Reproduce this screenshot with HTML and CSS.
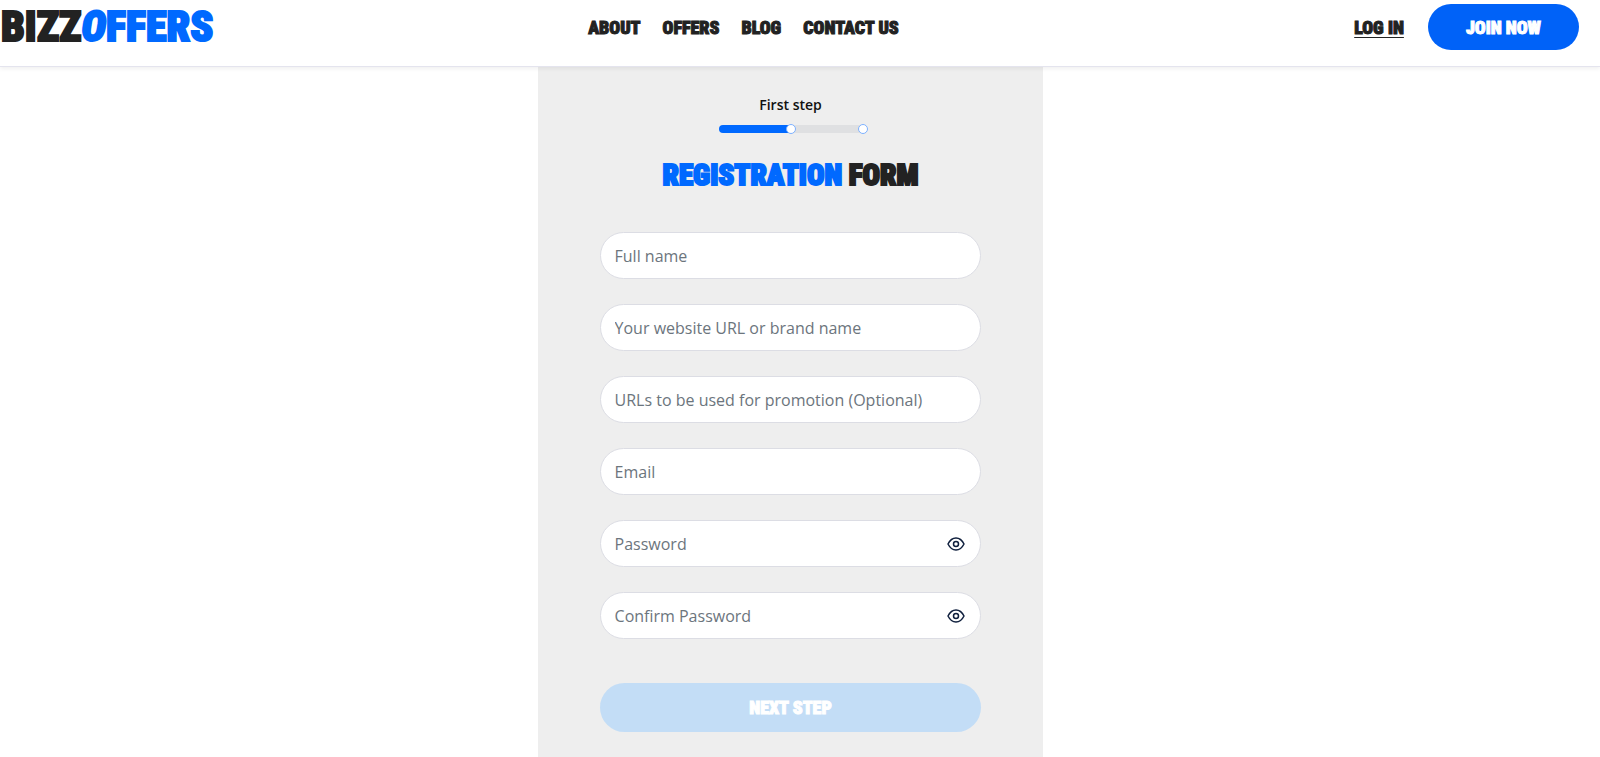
FILE: index.html
```html
<!DOCTYPE html>
<html lang="en">
  <head>
    <meta charset="UTF-8" />
    <meta name="viewport" content="width=device-width, initial-scale=1.0" />
    <title>BizzOffers - Registration</title>
    <link rel="stylesheet" href="styles.css">
  </head>
  <body>
    <header class="header">
      <a class="logo" href="#">BIZZ<span class="logo-blue"><i>O</i>FFERS</span></a>
      <nav class="nav">
        <a href="#">ABOUT</a>
        <a href="#">OFFERS</a>
        <a href="#">BLOG</a>
        <a href="#">CONTACT US</a>
      </nav>
      <div class="actions">
        <a class="login" href="#">LOG IN</a>
        <button class="join-btn" type="button">JOIN NOW</button>
      </div>
    </header>

    <main class="main">
      <section class="panel">
        <p class="step-label">First step</p>
        <div class="progress">
          <div class="progress-part done"><span class="dot"></span></div>
          <div class="progress-part"><span class="dot"></span></div>
        </div>
        <h1 class="title"><span>REGISTRATION</span> FORM</h1>

        <form class="form">
          <div class="field">
            <input type="text" placeholder="Full name" aria-label="Full name" />
          </div>
          <div class="field">
            <input type="text" placeholder="Your website URL or brand name" aria-label="Your website URL or brand name" />
          </div>
          <div class="field">
            <input type="text" placeholder="URLs to be used for promotion (Optional)" aria-label="URLs to be used for promotion (Optional)" />
          </div>
          <div class="field">
            <input type="email" placeholder="Email" aria-label="Email" />
          </div>
          <div class="field">
            <input type="password" placeholder="Password" aria-label="Password" />
            <button class="eye-btn" type="button" aria-label="Show password">
              <svg width="18" height="14" viewBox="0 0 18 14" fill="none" stroke="#0f1f3d" stroke-width="1.5">
                <path d="M1 7C3 3 5.8 1 9 1s6 2 8 6c-2 4-4.800 6-8 6S3 11 1 7z" stroke-linejoin="round" />
                <circle cx="9" cy="7" r="2.500" />
              </svg>
            </button>
          </div>
          <div class="field">
            <input type="password" placeholder="Confirm Password" aria-label="Confirm Password" />
            <button class="eye-btn" type="button" aria-label="Show password">
              <svg width="18" height="14" viewBox="0 0 18 14" fill="none" stroke="#0f1f3d" stroke-width="1.5">
                <path d="M1 7C3 3 5.8 1 9 1s6 2 8 6c-2 4-4.800 6-8 6S3 11 1 7z" stroke-linejoin="round" />
                <circle cx="9" cy="7" r="2.500" />
              </svg>
            </button>
          </div>
          <button class="next-btn" type="submit" disabled>NEXT STEP</button>
        </form>
      </section>
    </main>
  </body>
</html>
```
FILE: styles.css
```css
* {
  box-sizing: border-box;
}
body {
  margin: 0;
  min-height: 100vh;
  display: flex;
  flex-direction: column;
  background-color: #fff;
  color: #222;
  font-family: "Open Sans", "Noto Sans", sans-serif;
}
.header,
.title,
.join-btn,
.next-btn {
  font-family: Impact, "Roboto Condensed", Roboto, sans-serif;
  font-weight: 900;
}
.header {
  display: flex;
  align-items: center;
  height: 67px;
  padding: 4px 21px 16px 0;
  border-bottom: 1px solid #e4e4ee;
  box-shadow: 0 2px 4px rgba(0, 0, 0, 0.06);
  font-size: 18px;
  z-index: 1;
}
.header a {
  color: #222;
  text-decoration: none;
  white-space: nowrap;
}
.header .logo {
  flex: 0 0 37%;
  padding-left: 1px;
  font-size: 42px;
  line-height: 46px;
  -webkit-text-stroke: 2px currentColor;
}
.header .logo-blue {
  color: #0069ff;
}
.nav {
  display: flex;
  gap: 22px;
  margin-left: 4px;
}
.nav a,
.login,
.join-btn,
.next-btn {
  -webkit-text-stroke: 1px currentColor;
}
.actions {
  display: flex;
  align-items: center;
  gap: 24px;
  margin-left: auto;
}
.header .login {
  text-decoration: underline;
  text-underline-offset: 3px;
}
.join-btn {
  height: 46px;
  padding: 0 38px;
  border: none;
  border-radius: 23px;
  background-color: #0062f8;
  color: #fff;
  font-size: 18px;
  white-space: nowrap;
  cursor: pointer;
}
.main {
  flex: 1;
  display: flex;
  justify-content: center;
  padding-right: 19px;
}
.panel {
  width: 32%;
  min-width: 380px;
  padding: 28px 62px 24px;
  background-color: #eee;
}
.step-label {
  margin: 0 0 10px;
  color: #111;
  font-size: 14px;
  font-weight: 600;
  line-height: 20px;
  text-align: center;
}
.progress {
  display: flex;
  width: 144px;
  height: 8px;
  margin: 0 auto 22px;
}
.progress-part {
  flex: 1;
  display: flex;
  align-items: center;
  justify-content: flex-end;
  background-color: #dfe0e2;
}
.progress-part.done {
  background-color: #0069ff;
  border-radius: 4px 0 0 4px;
}
.dot {
  flex: none;
  width: 10px;
  height: 10px;
  margin-right: -5px;
  border: 1px solid #7db1ff;
  border-radius: 50%;
  background-color: #fff;
  z-index: 1;
}
.title {
  margin: 0 0 37px;
  font-size: 29px;
  line-height: 40px;
  text-align: center;
  -webkit-text-stroke: 2px currentColor;
}
.title span {
  color: #0069ff;
}
.form {
  display: flex;
  flex-direction: column;
  gap: 25px;
}
.field {
  display: flex;
  align-items: center;
  height: 47px;
  padding: 0 15px 0 14px;
  border: 1px solid #dcdde4;
  border-radius: 24px;
  background-color: #fff;
}
.field input {
  flex: 1;
  min-width: 0;
  padding: 0;
  border: none;
  outline: none;
  background: none;
  color: #222;
  font-family: inherit;
  font-size: 16px;
}
.field input::placeholder {
  color: #6c757d;
}
.eye-btn {
  display: flex;
  padding: 0;
  border: none;
  background: none;
  cursor: pointer;
}
.next-btn {
  height: 49px;
  margin-top: 19px;
  border: none;
  border-radius: 25px;
  background-color: #c3ddf6;
  color: #fff;
  font-size: 18px;
}
```
